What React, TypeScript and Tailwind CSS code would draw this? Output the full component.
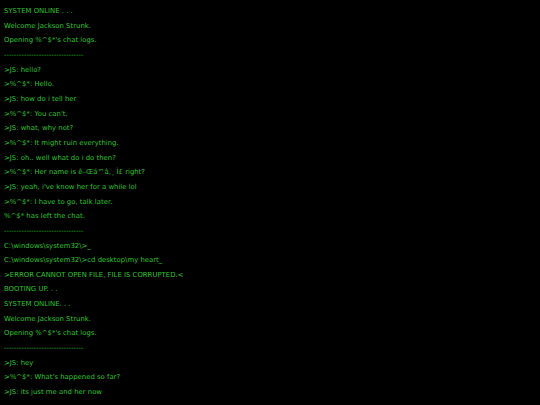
const dashes = "--------------------------------";

const lines = [
  "SYSTEM ONLINE . . .",
  "Welcome Jackson Strunk.",
  "Opening %^$*'s chat logs.",
  dashes,
  ">JS: hello?",
  ">%^$*: Hello.",
  ">JS: how do i tell her",
  ">%^$*: You can't.",
  ">JS: what, why not?",
  ">%^$*: It might ruin everything.",
  ">JS: oh.. well what do i do then?",
  ">%^$*: Her name is ê–Œá™â‚¸ Ì£ right?",
  ">JS: yeah, i've know her for a while lol",
  ">%^$*: I have to go, talk later.",
  "%^$* has left the chat.",
  dashes,
  "C:\\windows\\system32\\>_",
  "C:\\windows\\system32\\>cd desktop\\my heart_",
  ">ERROR CANNOT OPEN FILE, FILE IS CORRUPTED.<",
  "BOOTING UP. . .",
  "SYSTEM ONLINE. . .",
  "Welcome Jackson Strunk.",
  "Opening %^$*'s chat logs.",
  dashes,
  ">JS: hey",
  ">%^$*: What's happened so far?",
  ">JS: its just me and her now",
];

export default function App() {
  return (
    <div className="w-[540px] h-[405px] overflow-hidden bg-black px-[4px] pt-[4px] font-['DejaVu_Sans',sans-serif] text-[6.9px] leading-[14.65px] text-[#2cc42c]">
      {lines.map((line, i) => (
        <div key={i} className="whitespace-pre">
          {line}
        </div>
      ))}
    </div>
  );
}
